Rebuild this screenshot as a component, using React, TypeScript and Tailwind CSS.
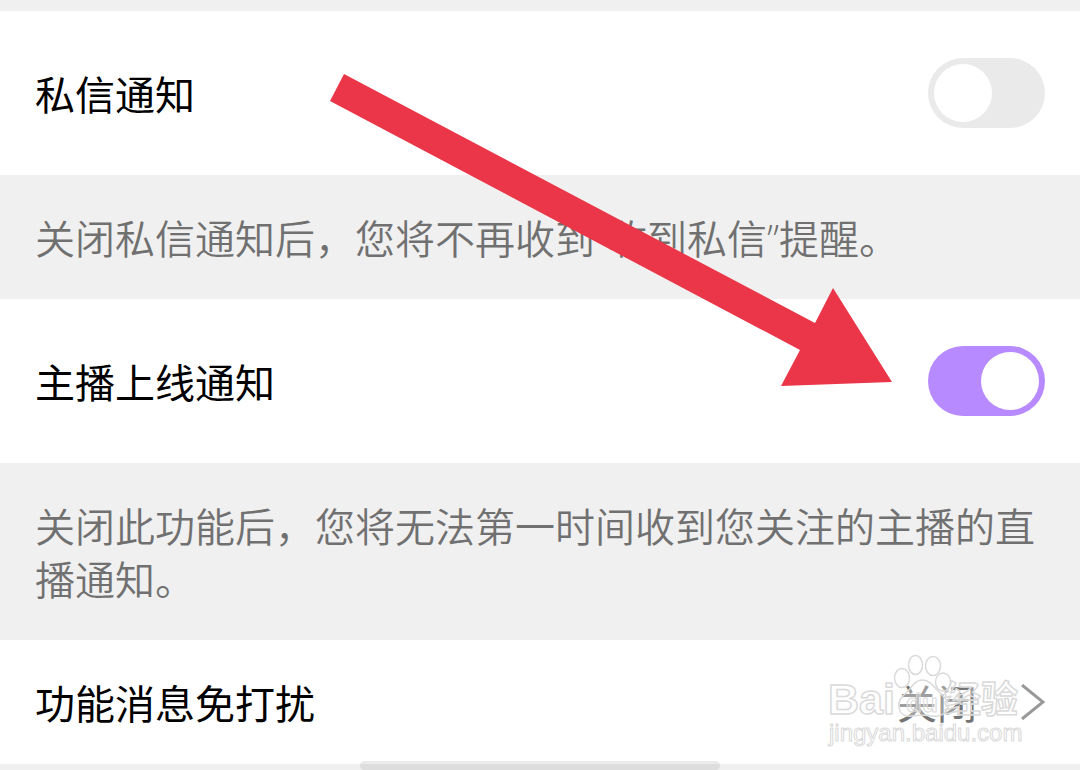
import React, { useState } from 'react';

interface SwitchRowProps {
    id: string;
    label: string;
    defaultOn?: boolean;
}

const SwitchRow: React.FC<SwitchRowProps> = ({ id, label, defaultOn = false }) => {
    const [on, setOn] = useState(defaultOn);

    return (
        <div className="flex items-center justify-between bg-white px-[35px] py-[47px]">
            <label htmlFor={id} className="pt-0.5 text-black">{label}</label>
            <input
                id={id}
                type="checkbox"
                role="switch"
                checked={on}
                onChange={(e) => setOn(e.target.checked)}
                className="flex h-[70px] w-[117px] shrink-0 appearance-none items-center rounded-full bg-[#eaeaea] px-1.5 before:size-[58px] before:rounded-full before:bg-white before:content-[''] checked:justify-end checked:bg-[#b78aff]"
            />
        </div>
    );
};

const Note: React.FC<{ children: React.ReactNode }> = ({ children }) => (
    <p className="px-[35px] pb-[34px] pt-[37px] font-[350] text-[#707070]">{children}</p>
);

const Arrow: React.FC = () => (
    <svg
        className="pointer-events-none absolute left-[330px] top-[74px]"
        width="562"
        height="312"
        viewBox="0 0 562 312"
        aria-hidden="true"
    >
        <polygon points="14,0 485,249 503,214 562,308 451,312 470,276 0,27" fill="#ea3648" />
    </svg>
);

const Watermark: React.FC = () => (
    <svg
        className="pointer-events-none absolute right-[55px] top-[650px]"
        width="200"
        height="100"
        viewBox="0 0 200 100"
        fill="#ffffff"
        fillOpacity="0.3"
        stroke="#dadada"
        strokeWidth="1.5"
        strokeLinejoin="round"
    >
        <ellipse cx="90.500" cy="15" rx="7" ry="9.500" />
        <ellipse cx="108" cy="16" rx="7.500" ry="9.500" />
        <ellipse cx="77" cy="28" rx="7.500" ry="9.500" />
        <ellipse cx="118" cy="32" rx="7.500" ry="9" />
        <path d="M97 30C90 30 87 37 82 42C76 47 73 51 74 57C75 64 80 67 86 66C93 65 101 65 108 66C115 67 121 64 123 57C124 51 119 47 114 42C108 36 105 30 97 30Z" />
        <g fontFamily="'Liberation Sans', 'Noto Sans CJK SC', sans-serif" fontWeight="700">
            <text x="3" y="64" fontSize="43">Bai</text>
            <text x="81" y="62" fontSize="26" strokeWidth="1">du</text>
            <text x="119" y="63" fontSize="37">经验</text>
        </g>
        <text x="4" y="91" fontSize="24" strokeWidth="1" fontFamily="'Liberation Sans', sans-serif">jingyan.baidu.com</text>
    </svg>
);

export default function App() {
    return (
        <main className="relative flex min-h-screen flex-col overflow-hidden bg-[#f0f0f0] pt-[11px] font-['Open_Sans','Noto_Sans_CJK_SC',sans-serif] text-[40px] font-normal leading-[53px]">
            <SwitchRow id="private-message" label="私信通知" />
            <Note>关闭私信通知后，您将不再收到“收到私信”提醒。</Note>

            <SwitchRow id="streamer-online" label="主播上线通知" defaultOn />
            <Note>关闭此功能后，您将无法第一时间收到您关注的主播的直播通知。</Note>

            <button type="button" className="mb-1.5 flex items-center justify-between bg-white px-[35px] pb-[34px] pt-[37px] text-left">
                <span className="text-black">功能消息免打扰</span>
                <span className="flex items-center gap-11 text-[#747474]">
                    关闭
                    <svg className="mb-1" width="24" height="36" viewBox="0 0 24 36" fill="none" stroke="#999999" strokeWidth="3" aria-hidden="true">
                        <path d="M1 1L22 18L1 35" />
                    </svg>
                </span>
            </button>

            <Arrow />
            <Watermark />

            {/* Home indicator */}
            <div className="absolute inset-x-0 bottom-0 mx-auto h-[9px] w-1/3 rounded-full bg-black/8" />
        </main>
    );
}
